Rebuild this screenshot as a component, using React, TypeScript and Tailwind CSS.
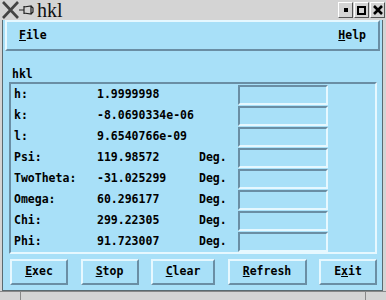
import React from "react";

const rows = [
  { label: "h:", value: "1.9999998", unit: "" },
  { label: "k:", value: "-8.0690334e-06", unit: "" },
  { label: "l:", value: "9.6540766e-09", unit: "" },
  { label: "Psi:", value: "119.98572", unit: "Deg." },
  { label: "TwoTheta:", value: "-31.025299", unit: "Deg." },
  { label: "Omega:", value: "60.296177", unit: "Deg." },
  { label: "Chi:", value: "299.22305", unit: "Deg." },
  { label: "Phi:", value: "91.723007", unit: "Deg." },
];

const buttons = [
  { pre: "", key: "E", post: "xec", w: "w-[58px]" },
  { pre: "", key: "S", post: "top", w: "w-[58px]" },
  { pre: "", key: "C", post: "lear", w: "w-[64px]" },
  { pre: "", key: "R", post: "efresh", w: "w-[79px]" },
  { pre: "E", key: "x", post: "it", w: "w-[58px]" },
];

const mono = "font-['DejaVu_Sans_Mono',monospace] font-bold text-[11.5px] text-black";

export default function App() {
  return (
    <div className="w-[386px] h-[300px] bg-[#d4d4d4] flex flex-col overflow-hidden">
      {/* title bar */}
      <div className="h-[20px] flex items-center pl-[1px] pr-[1px]">
        <svg width="20" height="18" viewBox="0 0 20 18">
          <path d="M2 1 L17 17 M17 1 L2 17" stroke="#444" strokeWidth="2.6" />
        </svg>
        <svg width="16" height="12" viewBox="0 0 16 12" className="ml-[-2px]">
          <path d="M0 6 H5 M5 2 V10 M5 3 L12 2 V10 L5 9 M12 2 L14 4 V8 L12 10" stroke="#222" strokeWidth="1.2" fill="none" />
        </svg>
        <span className="ml-[2px] font-['Liberation_Serif',serif] text-[20px] leading-[20px] text-[#111]">hkl</span>
        <div className="ml-auto flex gap-[1px]">
          {[0, 1, 2].map((i) => (
            <div
              key={i}
              className="w-[15px] h-[16px] bg-[#d4d4d4] border border-t-white border-l-white border-b-[#555] border-r-[#555] flex items-center justify-center"
            >
              {i === 0 && <div className="w-[4px] h-[4px] bg-black" />}
              {i === 1 && <div className="w-[9px] h-[9px] border-2 border-black" />}
              {i === 2 && (
                <svg width="10" height="10" viewBox="0 0 10 10">
                  <path d="M1 1 L9 9 M9 1 L1 9" stroke="#000" strokeWidth="2.6" />
                </svg>
              )}
            </div>
          ))}
        </div>
      </div>

      {/* window body */}
      <div className="flex-1 flex flex-col ml-[2px] mr-[3px] border-l border-r border-b border-[#5a6a70] bg-[#a8e0f8]">
        {/* menu bar */}
        <div className={`mx-[2px] h-[31px] flex items-center justify-between px-[12px] border-2 border-t-[#e6f8ff] border-l-[#e6f8ff] border-b-[#6a8ea4] border-r-[#6a8ea4] ${mono}`}>
          <span>
            <span className="underline">F</span>ile
          </span>
          <span>
            <span className="underline">H</span>elp
          </span>
        </div>

        <div className={`pl-[9px] pt-[15px] h-[31px] ${mono}`}>hkl</div>

        {/* frame */}
        <div className="ml-[6px] mr-[5px] border-2 border-t-[#6a8ea4] border-l-[#6a8ea4] border-b-[#e6f8ff] border-r-[#e6f8ff] flex flex-col">
          {rows.map((r) => (
            <div key={r.label} className={`h-[21px] flex items-center ${mono}`}>
              <span className="w-[86px] pl-[3px]">{r.label}</span>
              <span className="w-[102px]">{r.value}</span>
              <span className="w-[39px]">{r.unit}</span>
              <div className="w-[90px] h-[20px] border-2 border-t-[#6a8ea4] border-l-[#6a8ea4] border-b-[#e6f8ff] border-r-[#e6f8ff]" />
            </div>
          ))}
        </div>

        {/* buttons */}
        <div className="flex justify-between pl-[7px] pr-[5px] mt-[5px]">
          {buttons.map((b) => (
            <div
              key={b.post}
              className={`${b.w} h-[26px] flex items-center justify-center border-2 border-t-[#e6f8ff] border-l-[#e6f8ff] border-b-[#6a8ea4] border-r-[#6a8ea4] ${mono}`}
            >
              <span>
                {b.pre}
                <span className="underline">{b.key}</span>
                {b.post}
              </span>
            </div>
          ))}
        </div>
      </div>

      {/* bottom frame */}
      <div className="h-[9px] flex border-t border-[#888]">
        <div className="w-[21px] border-r border-[#888]" />
        <div className="flex-1 border-r border-[#888]" />
        <div className="w-[20px]" />
      </div>
    </div>
  );
}
